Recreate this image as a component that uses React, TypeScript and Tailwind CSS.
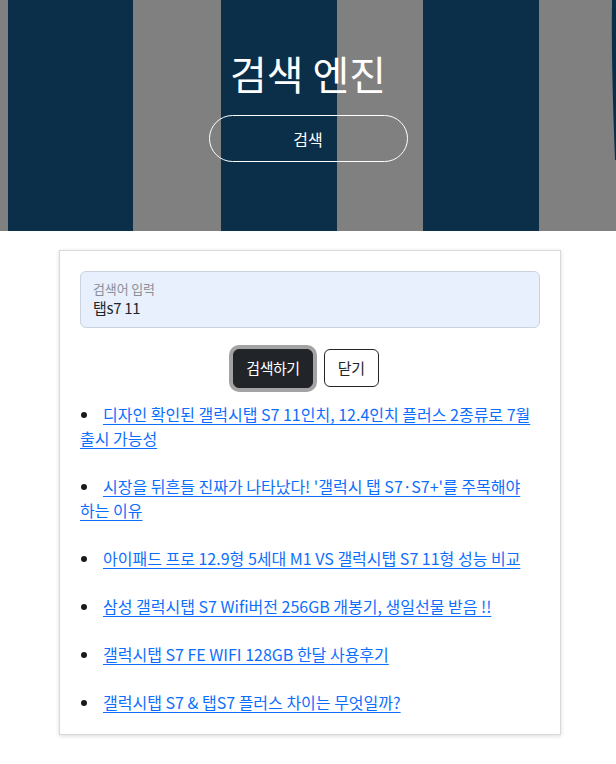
import React from "react";

const links = [
  "디자인 확인된 갤럭시탭 S7 11인치, 12.4인치 플러스 2종류로 7월 출시 가능성",
  "시장을 뒤흔들 진짜가 나타났다! '갤럭시 탭 S7·S7+'를 주목해야 하는 이유",
  "아이패드 프로 12.9형 5세대 M1 VS 갤럭시탭 S7 11형 성능 비교",
  "삼성 갤럭시탭 S7 Wifi버전 256GB 개봉기, 생일선물 받음 !!",
  "갤럭시탭 S7 FE WIFI 128GB 한달 사용후기",
  "갤럭시탭 S7 & 탭S7 플러스 차이는 무엇일까?",
];

function Stripes() {
  return (
    <div className="absolute inset-0 flex">
      <div className="w-[8px] bg-[#808080]" />
      <div className="w-[125px] bg-[#0b2f48]" />
      <div className="w-[88px] bg-[#808080]" />
      <div className="w-[116px] bg-[#0b2f48]" />
      <div className="w-[86px] bg-[#808080]" />
      <div className="w-[116px] bg-[#0b2f48]" />
      <div className="relative flex-1 bg-[#808080]">
        <svg className="absolute right-0 top-0" width="6" height="160" viewBox="0 0 6 160">
          <path d="M6 0 L2 0 Q1 60 5 160 L6 160 Z" fill="#0b2f48" />
        </svg>
      </div>
    </div>
  );
}

export default function App() {
  return (
    <div className="min-h-[764px] bg-white font-['Noto_Sans_CJK_KR','Noto_Sans',sans-serif] text-[#212529]">
      <header className="relative h-[231px] overflow-hidden">
        <Stripes />
        <div className="relative flex flex-col items-center pt-[46px]">
          <h1 className="text-[40px] leading-[54px] font-normal text-white">
            검색 엔진
          </h1>
          <button className="mt-[15px] h-[47px] w-[199px] rounded-full border border-white text-[16px] text-white">
            검색
          </button>
        </div>
      </header>

      <main className="flex pl-[59px] pt-[19px]">
        <div className="w-[502px] border border-[#d9d9d9] bg-white px-[20px] pt-[20px] pb-[20px] shadow-[0_1px_4px_rgba(0,0,0,0.15)]">
          <div className="flex h-[57px] flex-col justify-center rounded-[6px] border border-[#c9d2de] bg-[#e8f0fe] px-[12px]">
            <span className="text-[13px] leading-[17px] text-[#8a8f96] tracking-[-0.01em]">검색어 입력</span>
            <span className="text-[15px] leading-[22px] text-[#212529] tracking-[-0.02em]">탭s7 11</span>
          </div>

          <div className="mt-[21px] flex justify-center gap-[11px] pr-[8px]">
            <button className="h-[39px] rounded-[6px] border border-[#212529] bg-[#212529] px-[12px] text-[15px] text-white tracking-[-0.03em] shadow-[0_0_0_4px_#a3a3a3]">
              검색하기
            </button>
            <button className="h-[38px] rounded-[6px] border border-[#212529] bg-white px-[13px] text-[15px] text-[#212529] tracking-[-0.02em]">
              닫기
            </button>
          </div>

          <ul className="mt-[14px] flex flex-col gap-[24px]">
            {links.map((t) => (
              <li key={t} className="break-keep text-[16px] leading-[24px]">
                <span className="mb-[3px] ml-[1px] mr-[16px] inline-block h-[6px] w-[6px] rounded-full bg-[#1a1a1a] align-middle" />
                <a href="#" className="text-[#0d6efd] underline decoration-[#0d6efd] underline-offset-[3px]">
                  {t}
                </a>
              </li>
            ))}
          </ul>
        </div>
      </main>
    </div>
  );
}
